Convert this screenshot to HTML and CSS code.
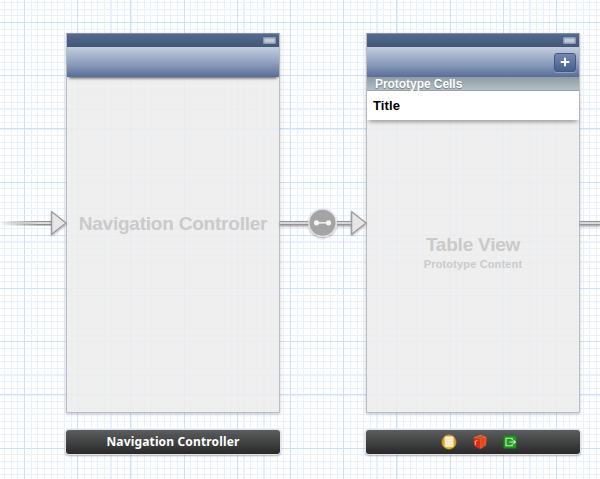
FILE: index.html
```html
<!DOCTYPE html>
<html lang="en">
<head>
<meta charset="utf-8">
<title>Storyboard</title>
<link rel="stylesheet" href="styles.css">
</head>
<body>
<main class="canvas">
  <section class="scene scene-nav">
    <div class="screen">
      <div class="status"><i class="battery"></i></div>
      <div class="navbar"></div>
      <div class="placeholder"><h1>Navigation Controller</h1></div>
    </div>
    <div class="dock">Navigation Controller</div>
  </section>

  <section class="scene scene-table">
    <div class="screen">
      <div class="status"><i class="battery"></i></div>
      <div class="navbar flat">
        <button class="add" aria-label="Add"><svg width="10" height="10" viewBox="0 0 10 10"><path d="M5 .7v8.6M.7 5h8.6" stroke="#fff" stroke-width="2"/></svg></button>
      </div>
      <div class="section-header">Prototype Cells</div>
      <div class="cell">Title</div>
      <div class="placeholder table"><h1>Table View</h1><p>Prototype Content</p></div>
    </div>
    <div class="dock icons">
      <svg width="16" height="16" viewBox="0 0 16 16">
        <defs><linearGradient id="gold" x2="0" y2="1"><stop stop-color="#e19a38"/><stop offset=".6" stop-color="#d9a02c"/><stop offset="1" stop-color="#ecc91f"/></linearGradient></defs>
        <circle cx="8" cy="8" r="7.2" fill="url(#gold)" stroke="#b98322" stroke-width=".6"/>
        <rect x="3.7" y="2.5" width="8.8" height="10.3" rx="1" fill="#fbf0d2"/>
        <path d="M4 5h8M4 7.6h8M4 10.2h8" stroke="#ecd6a8" stroke-width=".7"/>
      </svg>
      <svg width="16" height="16" viewBox="0 0 16 16">
        <path d="M1.2 3.6 8.6.8 14.7 3 8 5.5Z" fill="#ed6a45"/>
        <path d="M1.2 3.6 8 5.5V15.2L2.3 12Z" fill="#d92c1b"/>
        <path d="M8 5.5 14.7 3 14 11.4 8 15.2Z" fill="#e9541d"/>
        <path d="M4.4 2.6 11 4.4V13M11.5 2 4.8 4.6V7" fill="none" stroke="#c43a20" stroke-width=".8"/>
        <path d="M2.6 7.6 5.6 6.4M3.4 7.5v3.6" stroke="#ffc0a2" stroke-width=".9"/>
      </svg>
      <svg width="16" height="16" viewBox="0 0 16 16">
        <rect x="1.7" y="1.7" width="12.6" height="12.6" rx="1" fill="#239822" stroke="#16791a" stroke-width=".7"/>
        <path d="M10.2 6.3V4.2H4v7.6h6.2V9.7M7.3 8h6M11.5 6.2 13.4 8 11.5 9.8" fill="none" stroke="#c4edbb" stroke-width="1.1"/>
      </svg>
    </div>
  </section>

  <svg class="links" width="600" height="60" viewBox="0 0 600 60">
    <defs>
      <linearGradient id="fade" gradientUnits="userSpaceOnUse" x1="0" x2="52" y1="0" y2="0"><stop stop-color="#8c8c8c" stop-opacity="0"/><stop offset=".75" stop-color="#8c8c8c"/></linearGradient>
      <linearGradient id="fadeLight" gradientUnits="userSpaceOnUse" x1="0" x2="52" y1="0" y2="0"><stop stop-color="#dcdcdc" stop-opacity="0"/><stop offset=".75" stop-color="#dcdcdc"/></linearGradient>
      <filter id="soft" x="-20%" y="-20%" width="140%" height="150%"><feDropShadow dx="0" dy="1" stdDeviation=".8" flood-opacity=".35"/></filter>
    </defs>
    <rect x="0" y="26" width="52" height="4.5" fill="url(#fade)"/>
    <rect x="0" y="27" width="52" height="2" fill="url(#fadeLight)"/>
    <g filter="url(#soft)">
      <path d="M280 26h29v4.5h-29zM337 26h15v4.5h-15zM580 26h20v4.5h-20z" fill="#959595"/>
      <path d="M280 27h29v2h-29zM337 27h15v2h-15zM580 27h20v2h-20z" fill="#d8d8d8"/>
      <path d="M51.7 16.8 66 28 51.7 39.2Z" fill="#e6e6e6" stroke="#999" stroke-width="1.2"/>
      <path d="M351.7 16.8 366 28 351.7 39.2Z" fill="#e6e6e6" stroke="#999" stroke-width="1.2"/>
      <circle cx="322.5" cy="27.8" r="13.6" fill="#a4a4a4" stroke="#e4e4e4" stroke-width="1.2"/>
    </g>
    <g fill="#f5f5f5"><circle cx="316.5" cy="27.8" r="2.6"/><circle cx="328.5" cy="27.8" r="2.6"/><rect x="316" y="27.1" width="13" height="1.5"/></g>
  </svg>
</main>
</body>
</html>
```

FILE: styles.css
```css
* { box-sizing: border-box; }
body { margin: 0; font-family: "Liberation Sans", Arial, sans-serif; }

.canvas {
  position: relative;
  width: 600px;
  height: 479px;
  overflow: hidden;
  background-color: #fff;
  background-image:
    repeating-linear-gradient(90deg, #cbe0fb 0 1px, transparent 1px 53.2px),
    repeating-linear-gradient(180deg, #cbe0fb 0 1px, transparent 1px 53.2px),
    repeating-linear-gradient(90deg, #e8f0fd 0 1.1px, transparent 1.1px 6.65px),
    repeating-linear-gradient(180deg, #e8f0fd 0 1.1px, transparent 1.1px 6.65px);
  background-size: 700px 600px;
  background-position: -29.2px -31.2px;
}

/* Scenes are placed freely on the canvas */
.scene {
  position: absolute;
  top: 33px;
  width: 214px;
  display: flex;
  flex-direction: column;
  gap: 17px;
}
.scene-nav { left: 66px; }
.scene-table { left: 366px; }

.screen {
  height: 380px;
  display: flex;
  flex-direction: column;
  border: 1px solid #bcbdc0;
  border-top-color: #8790a0;
  background: rgba(236, 236, 236, .86);
  box-shadow: 0 1px 3px rgba(0, 0, 0, .22);
}
.status {
  height: 13px;
  display: flex;
  align-items: center;
  justify-content: flex-end;
  padding-right: 3px;
  background: linear-gradient(#536b8e, #425679);
}
.battery {
  width: 13px;
  height: 7px;
  border: 1px solid #8b9ab2;
  border-radius: 1px;
  background: #c3cbd7;
  box-shadow: inset 0 0 0 .5px #8f9db2;
}
.navbar {
  height: 30px;
  display: flex;
  align-items: center;
  justify-content: flex-end;
  padding-right: 3px;
  background: linear-gradient(#c3cddf, #8c9dbd 55%, #586d98);
  box-shadow: 0 3px 3px -2px rgba(0, 0, 0, .7);
}
.navbar.flat { box-shadow: none; }
.add {
  width: 22px;
  height: 19px;
  padding: 0;
  display: grid;
  place-items: center;
  border: 1px solid #48587c;
  border-radius: 3px;
  background: linear-gradient(#7588ad, #455f93);
  box-shadow: 0 1px 0 rgba(255, 255, 255, .25);
}
.section-header {
  height: 14px;
  padding-left: 8px;
  border-bottom: 1px solid #98a2aa;
  background: linear-gradient(#8e9ba4, #b4bfc7);
  color: #fff;
  font: bold 12px/14px "Liberation Sans", sans-serif;
  letter-spacing: -.05px;
  text-shadow: 0 1px 1px rgba(0, 0, 0, .35);
}
.cell {
  height: 29px;
  padding-left: 6px;
  background: #fff;
  color: #000;
  font: bold 13px/30px "Liberation Sans", sans-serif;
  letter-spacing: .15px;
  box-shadow: 0 4px 4px -2px rgba(0, 0, 0, .35);
}
.placeholder {
  flex: 1;
  display: flex;
  flex-direction: column;
  align-items: center;
  justify-content: center;
  padding-bottom: 42px;
  color: #cacaca;
  font-weight: bold;
  white-space: nowrap;
}
.placeholder.table { padding-bottom: 27px; }
.placeholder h1 { margin: 0; font-size: 19px; line-height: 22px; letter-spacing: -.22px; }
.placeholder p { margin: 1px 0 0; font-size: 11px; line-height: 15px; letter-spacing: .15px; }

.dock {
  height: 24px;
  display: flex;
  align-items: center;
  justify-content: center;
  border-radius: 3px;
  background: linear-gradient(#5c5d5e, #292929);
  box-shadow: 0 0 0 1px #e4e4e4, 0 1px 2px 1px rgba(0, 0, 0, .3);
  color: #fff;
  font: bold 12px/24px "Noto Sans", sans-serif;
  letter-spacing: .15px;
}
.dock.icons { gap: 14.5px; padding: 0 0 1px 13px; }
.dock svg { display: block; }

.links { position: absolute; left: 0; top: 195px; }
```
